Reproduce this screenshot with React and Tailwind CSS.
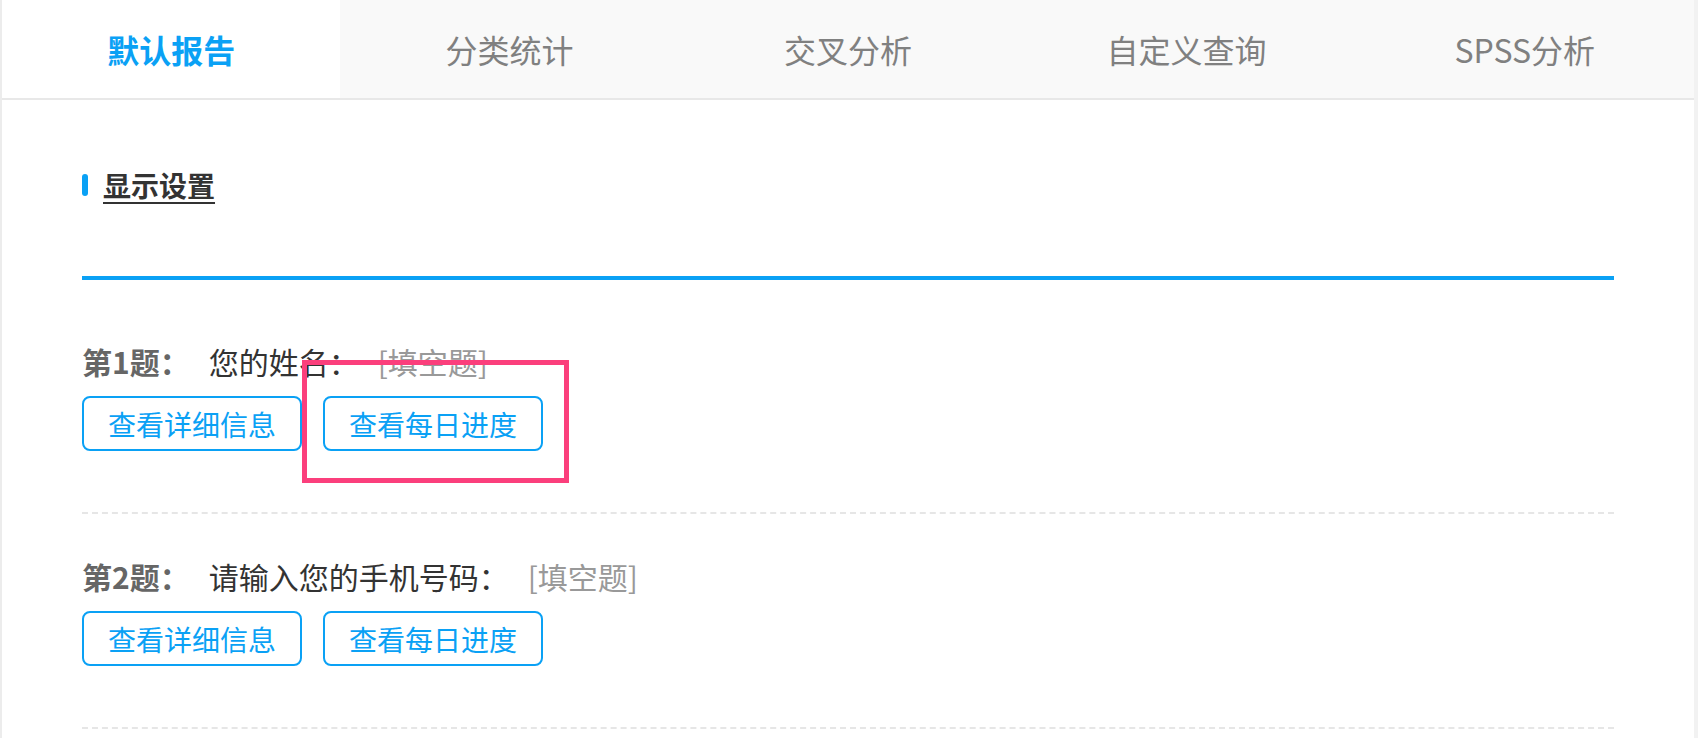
const tabs = ["默认报告", "分类统计", "交叉分析", "自定义查询", "SPSS分析"];

const questions = [
  { no: 1, title: "您的姓名：", type: "[填空题]", marked: true },
  { no: 2, title: "请输入您的手机号码：", type: "[填空题]" },
];

const ActionButton = ({ children }) => (
  <button className="h-[55px] px-[24px] border-2 border-[#0aa1f5] rounded-[8px] text-[28px] leading-none text-[#0aa1f5] bg-white">
    {children}
  </button>
);

const Question = ({ q }) => (
  <div className="relative pt-[42px] pb-[61px] border-b-2 border-dashed border-[#e6e6e6]">
    <div className="flex items-center h-[40px] text-[30px] leading-none">
      <span className="font-bold text-[#666]">第{q.no}题：</span>
      <span className="ml-[19px] text-[#333]">{q.title}</span>
      <span className="ml-[19px] text-[#999]">{q.type}</span>
    </div>
    <div className="flex gap-[21px] mt-[15px]">
      <ActionButton>查看详细信息</ActionButton>
      <ActionButton>查看每日进度</ActionButton>
    </div>
    {q.marked && (
      <div className="absolute left-[220px] top-[61px] w-[267px] h-[123px] border-[5px] border-[#fb3f7c] pointer-events-none" />
    )}
  </div>
);

export default function App() {
  return (
    <div
      className="min-h-screen bg-white border-l-2 border-r-4 border-l-[#ececec] border-r-[#f2f2f2]"
      style={{ fontFamily: '"Noto Sans CJK SC", "Noto Sans", sans-serif' }}
    >
      <div className="grid grid-cols-5 h-[100px] border-b-2 border-[#e8e8e8] bg-[#f9f9f9]">
        {tabs.map((t, i) => (
          <div
            key={t}
            className={`flex items-center justify-center text-[32px] ${
              i === 0 ? "bg-white text-[#0aa1f5] font-bold" : "text-[#808080]"
            }`}
          >
            {t}
          </div>
        ))}
      </div>

      <div className="px-[80px] pt-[65px]">
        <div className="flex items-center h-[40px]">
          <span className="w-[6px] h-[22px] rounded-full bg-[#0aa1f5]" />
          <span className="ml-[15px] text-[28px] font-bold text-[#333] underline decoration-2 underline-offset-[5px]">
            显示设置
          </span>
        </div>
        <div className="h-[4px] mt-[71px] mb-[19px] bg-[#0aa1f5]" />

        {questions.map((q) => (
          <Question key={q.no} q={q} />
        ))}
      </div>
    </div>
  );
}
